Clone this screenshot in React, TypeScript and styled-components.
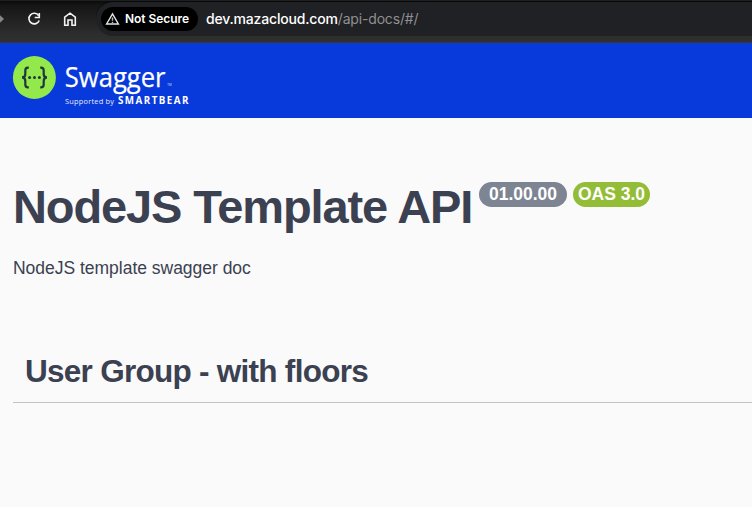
import React from "react";
import styled, { createGlobalStyle } from "styled-components";

const GlobalStyle = createGlobalStyle`
  * { box-sizing: border-box; }
  body { margin: 0; background: #fafafa; overflow: hidden; }
`;

const Page = styled.div`
  height: 508px;
  display: flex;
  flex-direction: column;
  overflow: hidden;
  background: #fafafa;
  border-bottom: 1px solid #fff;
  color: #3b4151;
  font-family: "Liberation Sans", Arial, sans-serif;
`;

const BrowserBar = styled.header`
  flex: none;
  height: 43px;
  display: flex;
  align-items: flex-start;
  border-top: 1px solid #1e201f;
  border-bottom: 1px solid #383838;
  background: linear-gradient(#0b0b0b 0, #151515 4px, #2d2d2d 33px, #303030 100%);
`;

const NavIcons = styled.div`
  width: 96px;
  height: 36px;
  flex: none;
`;

const AddressBar = styled.div`
  flex: 1;
  height: 35px;
  display: flex;
  align-items: center;
  padding-left: 5px;
  border-top: 1px solid #080808;
  border-radius: 17px 0 0 17px;
  background: #202124;
`;

const SecurityChip = styled.div`
  width: 97px;
  height: 24px;
  display: flex;
  align-items: center;
  padding-left: 4px;
  border-radius: 12px;
  background: #000;
`;

const ChipLabel = styled.span`
  margin-left: 5px;
  color: #fff;
  font: 600 12px/24px Inter, sans-serif;
  letter-spacing: -0.05px;
  white-space: nowrap;
`;

const Url = styled.div`
  margin-left: 8px;
  color: #8f9093;
  font: 400 14px/24px Inter, sans-serif;
  letter-spacing: -0.17px;
  white-space: nowrap;
`;

const Domain = styled.span`
  color: #fff;
  font-weight: 500;
  letter-spacing: -0.18px;
`;

const Topbar = styled.div`
  flex: none;
  height: 75px;
  background: #0839da;
`;

const Content = styled.main`
  padding: 64px 0 0 13px;
`;

const TitleRow = styled.div`
  display: flex;
  height: 56px;
`;

const Title = styled.h1`
  width: 466px;
  margin: 0;
  font-size: 47px;
  line-height: 50px;
  letter-spacing: -1.13px;
  white-space: nowrap;
`;

const Badge = styled.span<{ $color: string; $width: number }>`
  width: ${(p) => p.$width}px;
  height: 25px;
  margin-right: 6px;
  border-radius: 13px;
  background: ${(p) => p.$color};
  color: #fff;
  font-size: 17.5px;
  font-weight: 700;
  line-height: 25px;
  text-align: center;
  white-space: nowrap;
`;

const Description = styled.p`
  margin: 18px 0 0;
  font-size: 17.5px;
  line-height: 24px;
  letter-spacing: -0.02px;
`;

const TagHeading = styled.h3`
  height: 63px;
  margin: 60px 0 0;
  padding-left: 12px;
  border-bottom: 1px solid #c1c3c8;
  font-size: 31.5px;
  line-height: 63px;
  letter-spacing: -0.73px;
  font-variant-ligatures: none;
  white-space: nowrap;
`;

const ToolbarIcons = () => (
  <svg width="96" height="36" viewBox="0 1 96 36" fill="none" stroke="#f3f3f3" strokeWidth="1.6">
    <path d="M0 15.2 L4 19 L0 22.8 Z" fill="#868686" stroke="none" />
    <path d="M38.7 15.7 A5.3 5.3 0 1 0 39.2 20.5" />
    <path d="M39.3 13 V17.5 H34.7" />
    <path d="M64.7 25.2 V17.2 L70 13.2 L75.3 17.2 V25.2 H72 V20 H68 V25.2 Z" />
  </svg>
);

const WarningIcon = () => (
  <svg width="15" height="14" viewBox="0 0 15 14" fill="none" stroke="#e4e4e4" strokeWidth="1.4">
    <path d="M7.5 1.8 L13.4 12 H1.6 Z" />
    <path d="M7.5 5.5 V8.7 M7.5 9.7 V11" stroke="#bdbdbd" />
  </svg>
);

const SwaggerLogo = () => (
  <svg width="220" height="75" viewBox="0 43 220 75">
    <circle cx="34.4" cy="77.5" r="21.5" fill="#93e84b" />
    <g fill="none" stroke="#21373b" strokeWidth="2.2">
      <path d="M28.8 67.7 H28 Q25.3 67.7 25.3 70.5 V74 Q25.3 77.4 22 77.4 Q25.3 77.4 25.3 81 V84.5 Q25.3 87.3 28 87.3 H28.8" />
      <path d="M40.2 67.7 H41 Q43.7 67.7 43.7 70.5 V74 Q43.7 77.4 47 77.4 Q43.7 77.4 43.7 81 V84.5 Q43.7 87.3 41 87.3 H40.2" />
    </g>
    <g fill="#21373b">
      <circle cx="29.6" cy="77.4" r="1.5" />
      <circle cx="34.5" cy="77.4" r="1.5" />
      <circle cx="39.4" cy="77.4" r="1.5" />
    </g>
    <g fill="#fff">
      <text x="64.8" y="86.7" fontFamily="Open Sans" fontSize="27.5" stroke="#fff" strokeWidth="0.25" textLength="100.7" lengthAdjust="spacingAndGlyphs">Swagger</text>
      <text x="167.3" y="86.3" fontFamily="Open Sans" fontSize="3" opacity="0.8">TM</text>
      <text x="65" y="103.6" fontFamily="Open Sans" fontSize="7.4" textLength="49" opacity="0.9">Supported by</text>
      <text x="118" y="103.6" fontFamily="Open Sans" fontWeight="700" fontSize="9.8" textLength="70.5">SMARTBEAR</text>
    </g>
  </svg>
);

export default function App() {
  return (
    <>
      <GlobalStyle />
      <Page>
        <BrowserBar>
          <NavIcons><ToolbarIcons /></NavIcons>
          <AddressBar>
            <SecurityChip>
              <WarningIcon />
              <ChipLabel>Not Secure</ChipLabel>
            </SecurityChip>
            <Url><Domain>dev.mazacloud.com</Domain>/api-docs/#/</Url>
          </AddressBar>
        </BrowserBar>
        <Topbar><SwaggerLogo /></Topbar>
        <Content>
          <TitleRow>
            <Title>NodeJS Template API</Title>
            <Badge $color="#7d8492" $width={88}>01.00.00</Badge>
            <Badge $color="#93bd36" $width={77}>OAS 3.0</Badge>
          </TitleRow>
          <Description>NodeJS template swagger doc</Description>
          <TagHeading>User Group - with floors</TagHeading>
        </Content>
      </Page>
    </>
  );
}
